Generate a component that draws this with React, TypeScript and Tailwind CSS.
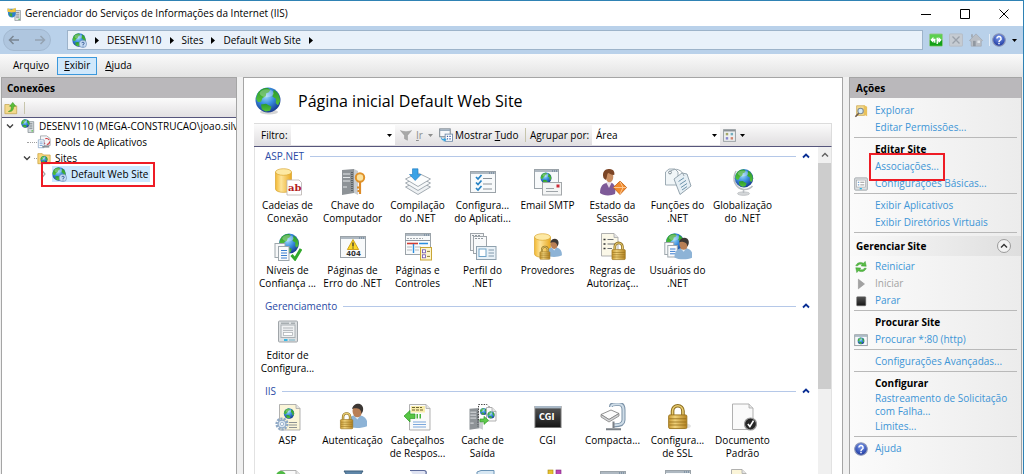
import type { ReactNode } from "react";

/* ---------- drawing parts shared by the icons ---------- */

type At = { x: number; y: number; s?: number };

function place({ x, y, s = 1 }: At) {
  return `translate(${x} ${y}) scale(${s})`;
}

// globe of radius 10 around 0,0
function Globe(p: At) {
  return (
    <g transform={place(p)}>
      <circle r="10" fill="url(#sea)" />
      <path
        d="M-8.6 -4.6 C-7 -8.4 -3 -9.9 0 -9.6 L2 -8 L0.4 -6 L-1.4 -5.4 L-1.8 -3 L-4.4 -1.6 L-5.6 1.4 L-8 1.6 L-9.6 -1 Z"
        fill="url(#land)"
      />
      <path d="M-5.6 3.6 L-1.6 3 L2.8 5.4 L1.6 8.6 L-2 9.2 L-5 7.4 Z" fill="url(#land)" />
      <path d="M4.6 -8.2 C8 -6.4 9.8 -3 9.6 1 L8 4.2 L6.2 2.4 L6.4 -1 L3.6 -2.6 L4 -5.6 Z" fill="url(#land)" />
      <ellipse cx="-1" cy="-5.4" rx="5.6" ry="3.2" fill="#fff" opacity=".28" />
    </g>
  );
}

function Padlock(p: At) {
  return (
    <g transform={place(p)}>
      <path d="M3.5 8 V5 a4 4 0 0 1 8 0 V8" fill="none" stroke="#8c6d1f" strokeWidth="2.8" />
      <path d="M3.5 8 V5 a4 4 0 0 1 8 0 V8" fill="none" stroke="#e9cd72" strokeWidth="1.2" />
      <rect x="0.5" y="8" width="14" height="10.5" rx="1" fill="url(#gold)" stroke="#9a741c" strokeWidth=".7" />
      <path d="M1 11 H14 M1 13.4 H14 M1 15.8 H14" stroke="#8f6a17" strokeWidth=".8" opacity=".75" />
    </g>
  );
}

function Person({ shirt = "#8db3d6", hair = "#3c3734", ...p }: At & { shirt?: string; hair?: string }) {
  return (
    <g transform={place(p)}>
      <path d="M0 19 C0 13 3 10.5 6 10 L12 10 C16 11 18 14 18 19 C13 21.5 4 21.5 0 19Z" fill={shirt} />
      <path d="M6 10 L9 13.5 L11.5 10Z" fill="#e9f1f8" />
      <ellipse cx="9" cy="6" rx="4.2" ry="5.6" fill="#b97f56" />
      <path d="M4.4 4.5 C5 0 10 -1.6 12.6 0.8 C15 3 14 7 12.6 8.4 C12.4 5.6 11 4 8.6 3.8 C7 3.6 5.4 3.6 4.4 4.5Z" fill={hair} />
    </g>
  );
}

function Cylinder(p: At) {
  return (
    <g transform={place(p)}>
      <path d="M0 3.5 V20.5 C0 25 16 25 16 20.5 V3.5Z" fill="url(#amber)" stroke="#d19a1f" strokeWidth=".6" />
      <ellipse cx="8" cy="3.5" rx="8" ry="3.3" fill="#fde9a4" stroke="#dba935" strokeWidth=".7" />
    </g>
  );
}

function Sheet({ w = 14, h = 18, fill = "#fafafa", ...p }: At & { w?: number; h?: number; fill?: string }) {
  return (
    <g transform={place(p)}>
      <path d={`M.5 .5 H${w - 4} L${w} 4.5 V${h} H.5Z`} fill={fill} stroke="#a8a8a8" strokeWidth=".9" />
      <path d={`M${w - 4} .5 V4.5 H${w}`} fill="#e4e4e4" stroke="#a8a8a8" strokeWidth=".8" />
    </g>
  );
}

function Frame({ w = 26, h = 20, ...p }: At & { w?: number; h?: number }) {
  return (
    <g transform={place(p)}>
      <rect x=".5" y=".5" width={w - 1} height={h - 1} fill="#f8fafb" stroke="#9ba3a9" />
      <rect x="1" y="1" width={w - 2} height="2" fill="#aeb8c1" />
      <path d={`M${w - 7} 2 H${w - 2}`} stroke="#56728c" strokeDasharray="1 1" />
    </g>
  );
}

function Tower(p: At) {
  return (
    <g transform={place(p)}>
      <path d="M0 1 L12 0 V24 L0 26Z" fill="#8e9397" />
      <path d="M12 0 L16 2 V26 L12 24Z" fill="#c9cdd0" />
      <path d="M1 5 H8 M1 8.5 H8 M1 12 H8 M1 18 H5" stroke="#e4e7e9" strokeWidth="1.1" />
      <path d="M10 3 V23" stroke="#5c6266" strokeWidth="2" strokeDasharray="1 1" />
    </g>
  );
}

function Defs() {
  return (
    <svg className="absolute size-0" aria-hidden="true">
      <defs>
        <radialGradient id="sea" cx=".42" cy=".35" r=".7">
          <stop offset="0" stopColor="#9fd8f8" />
          <stop offset=".45" stopColor="#3a8fe0" />
          <stop offset="1" stopColor="#132f86" />
        </radialGradient>
        <linearGradient id="land" x1="0" y1="0" x2="0" y2="1">
          <stop offset="0" stopColor="#2a9a2c" />
          <stop offset="1" stopColor="#55c23a" />
        </linearGradient>
        <linearGradient id="gold">
          <stop offset="0" stopColor="#c99a35" />
          <stop offset=".35" stopColor="#f0d27a" />
          <stop offset="1" stopColor="#b58322" />
        </linearGradient>
        <linearGradient id="amber">
          <stop offset="0" stopColor="#f3b933" />
          <stop offset=".35" stopColor="#fde49a" />
          <stop offset="1" stopColor="#e9a921" />
        </linearGradient>
        <linearGradient id="dark" x1="0" y1="0" x2="0" y2="1">
          <stop offset="0" stopColor="#555" />
          <stop offset="1" stopColor="#151515" />
        </linearGradient>
        <radialGradient id="help" cx=".5" cy=".3" r=".7">
          <stop offset="0" stopColor="#7c9cf0" />
          <stop offset="1" stopColor="#1a349c" />
        </radialGradient>
      </defs>
    </svg>
  );
}

/* ---------- feature icons, 28 x 28 ---------- */

const featureIcons: Record<string, ReactNode> = {
  connection: (
    <>
      <Cylinder x={1.5} y={0.5} />
      <path d="M13 12 H25 L27.5 14.5 V27 H13Z" fill="#fff" stroke="#b9b1ae" strokeWidth=".8" />
      <text x="14" y="23" fontSize="10" fontWeight="700" fill="#b3201c" className="font-['DejaVu_Serif',serif]">ab</text>
    </>
  ),
  key: (
    <>
      <Tower x={3} y={1} />
      <circle cx="21" cy="9.5" r="4.2" fill="#fbe3a0" stroke="#e0922a" strokeWidth="2" />
      <path d="M21 14 V26 M21 19.5 H18 M21 23 H18.5" stroke="#dd8b28" strokeWidth="2.2" fill="none" />
    </>
  ),
  compile: (
    <>
      <path d="M1.5 19 L14 13 L26.5 19 L14 26.5Z" fill="#eef1f3" stroke="#9aa3aa" strokeWidth=".9" />
      <path d="M1.5 15 L14 9 L26.5 15 L14 22.5Z" fill="#f6f8f9" stroke="#9aa3aa" strokeWidth=".9" />
      <path d="M1.5 11 L14 5 L26.5 11 L14 18.5Z" fill="#fcfdfd" stroke="#9aa3aa" strokeWidth=".9" />
      <path d="M8.5 .8 H14 V6.5 H17 L11.2 12.5 L5.5 6.5 H8.5Z" fill="#3aa2e6" stroke="#1d78bd" strokeWidth=".6" />
    </>
  ),
  appsettings: (
    <>
      <Frame x={1} y={3} h={22} />
      <path d="M7 9 l2 2 l3.5 -4 M7 14.5 l2 2 l3.5 -4 M7 20 l2 2 l3.5 -4" stroke="#2582c4" strokeWidth="1.7" fill="none" />
      <path d="M14 10.5 H23 M14 16 H23 M14 21 H23" stroke="#8a9299" strokeWidth="1.1" />
    </>
  ),
  smtp: (
    <>
      <Frame x={0} y={1} w={25} h={20} />
      <Globe x={12} y={10} s={0.55} />
      <rect x="8.5" y="14.5" width="19" height="12.5" fill="#f4f5f5" stroke="#a3a7aa" />
      <rect x="22.5" y="16.5" width="3" height="3" fill="#cc2a36" />
      <path d="M12 20.5 H20 M12 23.5 H24" stroke="#9ea4a8" />
    </>
  ),
  session: (
    <>
      <path d="M1 25 C1 18 4 15.5 8 15 L13 15 C16 17 17 20 16 26 C12 28 4 28 1 25Z" fill="#7e5a98" />
      <path d="M7 14 L10 20 L13 14Z" fill="#ecdfe9" />
      <ellipse cx="10.5" cy="8.8" rx="3.8" ry="5.5" fill="#c98e63" />
      <path d="M4.5 10 C2.5 3 7 .4 10.5 1 C15 1 16 5 15.2 7 C12 7 10 5 9 5 C7.6 6.6 8.4 10 6.6 12Z" fill="#7b4526" />
      <path d="M21 13 L27.6 19.5 L21 26.5 L14.4 19.5Z" fill="#f08a2c" stroke="#c25e10" strokeWidth=".8" />
      <path d="M21 13.5 L24 19.5 L21 26 M14.8 19.5 H24 L27 19.5" stroke="#ffd3a3" strokeWidth=".8" fill="none" />
    </>
  ),
  roles: (
    <>
      <path d="M1.5 4 L5 1 L11 1 L14 4 V17 H1.5Z" fill="#f1f6f8" stroke="#93a3ad" strokeWidth=".9" />
      <path d="M10 11 L18 5 L23 6 L27 18 L16 26.5Z" fill="#e6eff4" stroke="#8a9ba6" strokeWidth=".9" />
      <circle cx="6" cy="4.5" r="1.4" fill="#fff" stroke="#7c8b95" />
      <path d="M6 3.5 C12 -1 18 2 20 8" stroke="#9aa7af" fill="none" />
      <path d="M14.5 13.5 L20 9.8 M15.8 16.5 L22 12.4 M17 19.5 L23 15.5 M18 22 L23 18.6" stroke="#6e94ac" />
    </>
  ),
  globalization: (
    <>
      <ellipse cx="14.5" cy="25.6" rx="6" ry="1.8" fill="#d3d6d8" stroke="#b0b4b7" strokeWidth=".6" />
      <path d="M7 3 C2 12 7 21 15 21.4 C19 21.5 22 20 23.5 18 M14.5 21 V25" stroke="#b8bdc1" strokeWidth="1.5" fill="none" />
      <Globe x={15} y={10.3} s={0.92} />
    </>
  ),
  trust: (
    <>
      <Globe x={15} y={10.6} />
      <rect x="1" y="10.5" width="10" height="14" fill="#f7f8f9" stroke="#9ea7ad" />
      <rect x="4.5" y="13.5" width="10.5" height="14" fill="#fafbfc" stroke="#9ea7ad" />
      <path d="M7 17.5 H13 M7 20 H13 M7 22.5 H13 M7 25 H13" stroke="#3c7ed0" />
      <path d="M17.5 22 L21 26 L27 16" stroke="#32a92c" strokeWidth="3" fill="none" />
    </>
  ),
  errors: (
    <>
      <Frame x={1} y={3} h={22} />
      <path d="M14 6.5 L19.6 16.5 H8.4Z" fill="#fcd829" stroke="#c99b12" strokeWidth=".9" />
      <path d="M14 9.6 V13.4 M14 14.4 V15.5" stroke="#333" strokeWidth="1.3" />
      <text x="7.2" y="23.2" fontSize="7" fontWeight="700" fill="#333" className="font-['DejaVu_Sans',sans-serif]">404</text>
    </>
  ),
  controls: (
    <>
      <Frame x={1} y={0} h={22} />
      <path d="M3 5.5 H19" stroke="#a5abb0" strokeDasharray="2 1" />
      <path d="M1.5 7.5 H26" stroke="#8993a0" />
      <path d="M3 10.5 H14 " stroke="#cf3c35" strokeWidth="1.6" />
      <path d="M15 10.5 H24 M9.5 11 V20" stroke="#2a8ee0" strokeWidth="1.4" />
      <path d="M3 14 H8 M3 17 H8 M11 14 H17 M11 17 H15" stroke="#b4babe" />
      <rect x="16.5" y="14.5" width="11" height="12.5" fill="#fdf5cc" stroke="#c9a636" />
      <rect x="18.5" y="16.8" width="3" height="3" fill="#fff" stroke="#6b4fb0" strokeWidth=".8" />
      <rect x="18.5" y="21.8" width="3" height="3" fill="#fff" stroke="#6b4fb0" strokeWidth=".8" />
      <path d="M23 18.4 H26 M23 23.4 H26" stroke="#8d7a3a" />
    </>
  ),
  profile: (
    <>
      <rect x="1.5" y=".5" width="13" height="17" fill="#f4f5f6" stroke="#9fa5aa" />
      <rect x="4.5" y="3.5" width="13" height="17" fill="#f8f9fa" stroke="#9fa5aa" />
      <path d="M3 2.5 H12 M6 5.5 H15" stroke="#8f979d" strokeDasharray="2 1" />
      <rect x="7.5" y="13.5" width="19.5" height="13" fill="#e9f1f7" stroke="#8fa1ae" />
      <rect x="10" y="16" width="7" height="7.5" fill="#fff" stroke="#6fa3c8" />
      <path d="M19.5 17 H25 M19.5 20 H25 M19.5 23 H25" stroke="#8098aa" />
    </>
  ),
  providers: (
    <>
      <Cylinder x={0.5} y={0.5} />
      <Person x={12.5} y={6} s={0.86} />
      <Padlock x={5.5} y={13} s={0.72} />
    </>
  ),
  rules: (
    <>
      <Sheet x={2} y={0} w={17} h={23} fill="#fbf8e8" />
      <path d="M4.5 6.5 H6.5 M4.5 11 H6.5 M4.5 15.5 H6.5" stroke="#333" strokeWidth="1.6" />
      <path d="M8.5 6.5 H14.5 M8.5 11 H16 M8.5 15.5 H13" stroke="#6f7377" />
      <Padlock x={12.5} y={9} s={0.95} />
    </>
  ),
  users: (
    <>
      <Globe x={11} y={9.5} s={0.92} />
      <rect x=".8" y="9.5" width="9" height="12" fill="#f8f9fa" stroke="#9ea7ad" />
      <rect x="3.8" y="12.5" width="9.5" height="11.5" fill="#fbfcfd" stroke="#9ea7ad" />
      <path d="M6 16 H11.5 M6 18.4 H11.5 M6 20.8 H11.5" stroke="#3c7ed0" />
      <Person x={10.5} y={5} s={1.02} />
    </>
  ),
  editor: (
    <>
      <rect x="4.5" y="3" width="19" height="21" rx="1" fill="#dde0e2" stroke="#a0a5a9" />
      <rect x="7" y="7" width="14" height="12.5" fill="#eff1f2" stroke="#aab0b4" />
      <path d="M7 5.2 H15 M17 5.2 H21" stroke="#8f979c" />
      <path d="M9 10 H19 M9 12.4 H19" stroke="#b0b5b9" />
      <rect x="9.5" y="14.5" width="9" height="3" fill="#fff" stroke="#b0b5b9" strokeWidth=".8" />
      <path d="M10 22 H13.5" stroke="#25b4e6" strokeWidth="1.8" />
      <path d="M15 22 H21" stroke="#a3c8d4" strokeWidth="1.8" />
    </>
  ),
  asp: (
    <>
      <Sheet x={5} y={1} w={21} h={26} fill="#fbf5d8" />
      <Globe x={15} y={10.5} s={0.52} />
      <path d="M15 19.5 H23 M15 22 H23 M15 24.5 H23" stroke="#8d9193" />
      <circle cx="8" cy="21" r="5.4" fill="none" stroke="#8fa9c6" strokeWidth="2.4" strokeDasharray="2.2 1.1" />
      <circle cx="8" cy="21" r="3.9" fill="#dbe6f1" stroke="#8fa9c6" strokeWidth="1.2" />
      <circle cx="8" cy="21" r="1.6" fill="#fff" stroke="#8fa9c6" strokeWidth=".8" />
    </>
  ),
  auth: (
    <>
      <Person x={8} y={1} s={1.15} />
      <Padlock x={1} y={9.5} s={0.88} />
    </>
  ),
  headers: (
    <>
      <Sheet x={5} y={1} w={21} h={26} />
      <rect x="7" y="3" width="14" height="6.5" fill="#f9edab" />
      <path d="M8 4.5 H18 M8 7 H20" stroke="#6d6430" strokeDasharray="3 1" />
      <path d="M0 13 L6 7.5 V11 H11 V15.5 H6 V19Z" fill="#57c544" stroke="#2f9a26" strokeWidth=".7" />
      <path d="M12.5 13.2 H14 M15.5 13.2 H17" stroke="#47b53b" strokeWidth="4.4" />
      <path d="M9 19 H22 M9 21.5 H22 M9 24 H22" stroke="#7ba7dc" />
    </>
  ),
  cache: (
    <>
      <Tower x={0.5} y={5} s={0.84} />
      <path d="M9.5 1.5 H18 L21 4.5 V17 H9.5Z" fill="#fff" stroke="#444" strokeDasharray="1.4 1.2" />
      <Globe x={14.5} y={8.5} s={0.35} />
      <Sheet x={17} y={4} w={10} h={14} />
      <Globe x={22} y={12} s={0.36} />
      <path d="M11 16 H15 V13.4 L19.5 17.4 L15 21.4 V18.8 H11Z" fill="#5fc94b" stroke="#2f9a26" strokeWidth=".7" />
    </>
  ),
  cgi: (
    <>
      <rect x="1" y="3.5" width="26" height="21" fill="url(#dark)" stroke="#777" />
      <rect x="1" y="3" width="26" height="2.4" fill="#a9b8c6" />
      <text x="5" y="17" fontSize="8" fontWeight="700" fill="#fff" className="font-['DejaVu_Sans',sans-serif]">
        CGI
      </text>
    </>
  ),
  compression: (
    <>
      <path d="M12 4 C12 1 14 1 17 1 H20 C24 1 24.5 4 24.5 7 V17 C24.5 21 21 22.5 15 22.5" fill="none" stroke="#7d93a8" strokeWidth="4" />
      <path d="M12 4 C12 1.5 14 1.2 17 1.2 H20 C24 1.2 24.5 4 24.5 7 V17 C24.5 21 21 22.2 15 22.2" fill="none" stroke="#cfdde8" strokeWidth="2" />
      <path d="M2 11.5 L12 7 L20 10.5 L10 16.5Z" fill="#fcfcfc" stroke="#777" strokeWidth=".8" />
      <path d="M2 11.5 V14 L10 19 L20 13 V10.5 L10 16.5Z" fill="#d4d6d8" stroke="#777" strokeWidth=".7" />
      <path d="M14.5 18.5 V25 M7 26.3 H22" stroke="#7a8087" strokeWidth="2" />
    </>
  ),
  ssl: (
    <>
      <ellipse cx="19" cy="23" rx="8" ry="3" fill="#e3e3e3" />
      <Padlock x={4} y={1.5} s={1.3} />
    </>
  ),
  document: (
    <>
      <Sheet x={3} y={0.5} w={21} h={26} />
      <circle cx="21.5" cy="21" r="6" fill="#262626" stroke="#9a9a9a" strokeWidth="1.2" />
      <path d="M18.9 21 L20.9 23.6 L24.5 17.6" stroke="#fff" strokeWidth="1.7" fill="none" />
    </>
  ),
  pageGreen: (
    <>
      <Sheet x={6} y={2} w={20} h={26} />
      <circle cx="7" cy="8" r="5" fill="#4fb944" />
    </>
  ),
  funnel: <path d="M5 3 H24 L17 13 V26 H12 V13Z" fill="#5f86a8" stroke="#3d5f7c" />,
  scroll: (
    <path d="M6 2.5 H20 C23 2.5 23 7 20 7 H10 V26 H24" fill="#dfe3f2" stroke="#5c6a9a" strokeWidth="1.2" />
  ),
  module: <path d="M8 4 L12 2.5 H25 V20 L20 24 H8Z" fill="#d7e7f3" stroke="#6a93b6" />,
  books: (
    <>
      <rect x="14" y="2" width="5" height="22" fill="#e6c12f" stroke="#a88710" strokeWidth=".6" />
      <rect x="22" y="2" width="5" height="22" fill="#bb45b8" stroke="#7d2a7a" strokeWidth=".6" />
    </>
  ),
  darkWindow: (
    <>
      <Frame x={1} y={3} h={22} />
      <rect x="2" y="6" width="24" height="18" fill="#4c6378" />
    </>
  ),
  window: <Frame x={1} y={2} h={22} />,
  pageCream: <Sheet x={2} y={1} w={15} h={24} fill="#fbf5d8" />,
};

/* ---------- small icons, 16 x 16 ---------- */

const smallIcons: Record<string, ReactNode> = {
  site: (
    <>
      <Globe x={7.5} y={7.5} s={0.72} />
      <circle cx="11.6" cy="11.6" r="4" fill="#c6dcf3" stroke="#6d90bb" strokeWidth=".7" />
      <path d="M10.4 10.8 a1.3 1.2 0 1 1 1.3 1.4 V13 M11.7 13.6 V14.4" stroke="#2a4f90" strokeWidth=".9" fill="none" />
    </>
  ),
  server: (
    <>
      <path d="M8 3 H14.5 V15.5 H8Z" fill="#d5dadd" stroke="#80888e" strokeWidth=".8" />
      <path d="M9.5 5.5 H13 M9.5 8 H13 M9.5 10.5 H13" stroke="#6f777d" />
      <path d="M12 13.5 H13.6" stroke="#48c23a" strokeWidth="1.4" />
      <Globe x={5} y={5.2} s={0.48} />
    </>
  ),
  app: (
    <>
      <path d="M9 4 H15.4 V15.5 H9Z" fill="#dde1e3" stroke="#8b9297" strokeWidth=".8" />
      <path d="M10.4 6.5 H14 M10.4 9 H14 M10.4 11.5 H14" stroke="#727a80" />
      <path d="M13 14 H14.8" stroke="#48c23a" strokeWidth="1.4" />
      <path d="M.6 2 H10 V8 C9.5 13 3 13 1.4 9Z" fill="#2f7fd0" />
      <path d="M.6 1.4 L5 3.2 L10 .8 V5.8 L5 6.4 L.6 5.4Z" fill="#f2c53b" />
      <path d="M2.5 7 H6 V11.4 L3 10Z" fill="#3faa3a" />
    </>
  ),
  pools: (
    <>
      <path d="M4 1 H11 L15 4 V12 H4Z" fill="#f5f6f8" stroke="#8d949a" strokeWidth=".8" />
      <circle cx="11" cy="7.4" r="3.4" fill="none" stroke="#cf3a3f" strokeWidth="1.2" strokeDasharray="5 2" />
      <path d="M1.5 5.5 H8 V14.5 H1.5Z" fill="#fff" stroke="#7b9cc0" strokeWidth=".8" />
      <path d="M3 8 H6.5 M3 10 H6.5 M3 12 H6.5" stroke="#4d86c6" strokeWidth=".8" />
      <path d="M6 13.5 H14" stroke="#7c858c" strokeWidth="1.6" />
    </>
  ),
  sites: (
    <>
      <path d="M1 3 H6 L7.5 4.6 H15 V14.5 H1Z" fill="#f6d67c" stroke="#c99c33" strokeWidth=".8" />
      <Globe x={8} y={9.6} s={0.4} />
    </>
  ),
  folderUp: (
    <>
      <path d="M1 4 H6 L7.5 5.6 H14.5 V14.5 H1Z" fill="#f3d98b" stroke="#c2a04a" strokeWidth=".8" />
      <path d="M5 12 C8 11.5 8.4 9 8.4 6 H6.4 L10 1.6 L13.4 6 H11 C11 10.4 9 12.6 5 12Z" fill="#5bbf3a" stroke="#2f8f1c" strokeWidth=".6" />
    </>
  ),
  explore: (
    <>
      <path d="M3 2 H12 V13 H3Z" fill="#f5dc92" stroke="#c9a145" strokeWidth=".8" />
      <path d="M11 1 L15 3 V14 L11 12Z" fill="#e9c15c" />
      <circle cx="7.5" cy="8" r="3.1" fill="#d5ecfa" stroke="#7d8a94" strokeWidth="1.2" />
      <path d="M5.4 10.6 L1.6 14.6" stroke="#6c5a4a" strokeWidth="1.8" />
    </>
  ),
  settings: (
    <>
      <rect x=".8" y="1" width="14.4" height="14" rx="1" fill="#dfe2e4" stroke="#9aa0a5" />
      <rect x="2.8" y="3.5" width="10.4" height="8" fill="#fff" stroke="#9aa0a5" strokeWidth=".7" />
      <path d="M4.4 6 H6 M4.4 9 H6" stroke="#3377bb" />
      <path d="M7.2 6 H11.8 M7.2 9 H11.8" stroke="#888" />
      <path d="M6.5 13.3 H9" stroke="#25b4e6" strokeWidth="1.4" />
    </>
  ),
  restart: (
    <>
      <path d="M2 6.6 C3.4 2.6 8 1.8 10.8 3.8 L12.8 1.6 L14 7.2 L8.2 6.8 L9.6 5.2 C7.4 4.2 5 4.8 4.2 6.6Z" fill="#58be45" stroke="#2f8f26" strokeWidth=".5" />
      <path d="M14 9.4 C12.6 13.4 8 14.2 5.2 12.2 L3.2 14.4 L2 8.8 L7.8 9.2 L6.4 10.8 C8.6 11.8 11 11.2 11.8 9.4Z" fill="#58be45" stroke="#2f8f26" strokeWidth=".5" />
    </>
  ),
  play: <path d="M5 2.5 L12 8 L5 13.5Z" fill="#a2a2a2" stroke="#8a8a8a" strokeWidth=".6" />,
  stop: <rect x="3" y="3" width="10.5" height="10.5" rx="1" fill="url(#dark)" stroke="#777" strokeWidth=".6" />,
  browse: (
    <>
      <rect x=".8" y="2" width="14.4" height="12.4" fill="#f7f8f9" stroke="#8f979d" />
      <path d="M1 3.4 H15" stroke="#9fb0bd" strokeWidth="1.8" />
      <Globe x={8} y={9} s={0.38} />
    </>
  ),
  help: (
    <>
      <circle cx="8" cy="8" r="7.2" fill="url(#help)" stroke="#8e98b8" strokeWidth="1.3" />
      <path d="M5.6 6.4 a2.4 2.3 0 1 1 3.5 2 C8.2 8.9 8 9.2 8 10.2 M8 11.2 V12.9" stroke="#fff" strokeWidth="1.7" fill="none" />
    </>
  ),
  refresh: (
    <>
      <rect x=".5" y="1" width="15" height="14" rx="1" fill="#5cd04e" stroke="#9bc79a" />
      <path d="M1 8 H15 V14.5 H1Z" fill="#12a017" />
      <path d="M1.6 8 L5 4.4 V6.6 H7.4 V11 H5.8 V9.4 H5 V11.4Z" fill="#fff" />
      <path d="M14.4 8 L11 11.6 V9.8 H10.2 V12.6 H8.6 V5.4 H10.4 V6.6 H11 V4.6Z" fill="#fff" />
    </>
  ),
  cancel: (
    <>
      <rect x=".5" y="1" width="15" height="14" rx="1" fill="#c5cbd2" stroke="#b5bcc5" />
      <path d="M4 4 L12 12 M12 4 L4 12" stroke="#9aa1aa" strokeWidth="1.5" />
    </>
  ),
  home: (
    <>
      <path d="M.5 8.6 L8 1 L15.5 8.6 L14 9.6 V15 H2.5 V9.6Z" fill="#b9bec5" stroke="#a1a8b1" strokeWidth=".8" />
      <path d="M3.4 1.4 V5" stroke="#a1a8b1" strokeWidth="2" />
      <rect x="4.6" y="9" width="3" height="6" fill="#9097a0" />
      <rect x="9.6" y="8.6" width="3" height="2.8" fill="#e2e6ea" />
    </>
  ),
  filter: <path d="M.5 2 C4 4 12 4 15.5 2 L10 8.5 V15 L6 13 V8.5Z" fill="#a8a8a8" stroke="#8f8f8f" strokeWidth=".6" />,
  showAll: (
    <>
      <rect x=".8" y="1" width="12" height="9" fill="#f6f8fa" stroke="#77818a" strokeWidth="1.1" />
      <path d="M1 2.5 H12.6" stroke="#8da2b5" strokeWidth="1.6" />
      <rect x="7" y="7" width="8.4" height="8.2" fill="#fff" stroke="#6d88a8" />
      <path d="M9 9.6 H10.4 M11.8 9.6 H13.4 M9 12.4 H10.4 M11.8 12.4 H13.4" stroke="#3a5fa8" strokeWidth="1.4" />
      <path d="M2 9 C3 12 4 12.6 5.4 12.6 V11 L8.8 13.4 L5.4 15.8 V14.4 C3 14.4 2 12 2 9Z" fill="#38a4e0" />
    </>
  ),
  tiles: (
    <>
      <rect x=".7" y=".8" width="14.6" height="14.4" fill="#eef0f1" stroke="#9aa0a4" strokeWidth="1.2" />
      <path d="M1 2 H15" stroke="#8b9196" strokeWidth="2" />
      <rect x="3.4" y="4.8" width="3" height="3" fill="#a5a76a" />
      <rect x="9.4" y="4.8" width="3" height="3" fill="#76aebf" />
      <rect x="3.4" y="10" width="3" height="3" fill="#8886cf" />
      <rect x="9.4" y="10" width="3" height="3" fill="#cf8470" />
    </>
  ),
};

function Small({ name, className = "size-3.5" }: { name: string; className?: string }) {
  return (
    <svg viewBox="0 0 16 16" className={`shrink-0 ${className}`} aria-hidden="true">
      {smallIcons[name]}
    </svg>
  );
}

function Down({ className = "text-black" }: { className?: string }) {
  return (
    <svg viewBox="0 0 5 3" className={`h-[3px] w-[5px] shrink-0 ${className}`} aria-hidden="true">
      <path d="M0 0 H5 L2.5 3Z" fill="currentColor" />
    </svg>
  );
}

function Crumb() {
  return (
    <svg viewBox="0 0 4 7" className="mx-2 h-[7px] w-1 shrink-0" aria-hidden="true">
      <path d="M0 0 L4 3.5 L0 7Z" />
    </svg>
  );
}

function Twisty({ open, className = "" }: { open: boolean; className?: string }) {
  return (
    <svg viewBox="0 0 8 8" className={`size-2 shrink-0 fill-none ${className}`} aria-hidden="true">
      {open ? (
        <path d="M1 2.5 L4 5.5 L7 2.5" stroke="#404040" strokeWidth="1.4" />
      ) : (
        <path d="M2.5 1 L5 4 L2.5 7" stroke="#a6a6a6" strokeWidth="1.2" />
      )}
    </svg>
  );
}

/* ---------- window bars ---------- */

function TitleBar() {
  return (
    <header className="flex h-[25px] shrink-0 items-center bg-white pl-[7px]">
      <Small name="app" />
      <h1 className="ml-1 flex-1">Gerenciador do Serviços de Informações da Internet (IIS)</h1>
      <button aria-label="Minimizar" className="flex h-6 w-[39px] items-center justify-center">
        <svg viewBox="0 0 10 10" className="size-2.5"><path d="M0 5.5 H10" stroke="#000" /></svg>
      </button>
      <button aria-label="Maximizar" className="flex h-6 w-[39px] items-center justify-center">
        <svg viewBox="0 0 10 10" className="size-2.5 fill-none"><path d="M.5 .5 H9.5 V9.5 H.5Z" stroke="#000" /></svg>
      </button>
      <button aria-label="Fechar" className="flex h-6 w-[39px] items-center justify-center">
        <svg viewBox="0 0 10 10" className="size-2.5"><path d="M.5 .5 L9.5 9.5 M9.5 .5 L.5 9.5" stroke="#000" /></svg>
      </button>
    </header>
  );
}

function AddressBar() {
  return (
    <div className="flex h-7 shrink-0 items-center bg-[#b9d1ea] pr-1.5">
      <div className="ml-[3px] flex h-[22px] w-12 items-center justify-between rounded-xl border border-[#a3b9d1] bg-[#afc6df] px-1">
        <button aria-label="Voltar">
          <svg viewBox="0 0 12 10" className="h-2.5 w-3 fill-none"><path d="M11 5 H1.5 M5.5 1 L1.5 5 L5.5 9" stroke="#7b8794" strokeWidth="1.5" /></svg>
        </button>
        <button aria-label="Avançar">
          <svg viewBox="0 0 12 10" className="h-2.5 w-3 fill-none"><path d="M1 5 H10.5 M6.5 1 L10.5 5 L6.5 9" stroke="#95a3b2" strokeWidth="1.5" /></svg>
        </button>
      </div>
      <nav aria-label="Caminho" className="ml-4 flex h-5 flex-1 items-center border border-[#9db3ca] bg-[#e9f1fa] pl-1">
        <Small name="site" className="size-[15px]" />
        <Crumb />
        <a href="#">DESENV110</a>
        <Crumb />
        <a href="#">Sites</a>
        <Crumb />
        <a href="#">Default Web Site</a>
        <Crumb />
      </nav>
      <div className="ml-1.5 flex items-center gap-1.5">
        <button aria-label="Atualizar"><Small name="refresh" /></button>
        <button aria-label="Interromper"><Small name="cancel" /></button>
        <button aria-label="Início"><Small name="home" /></button>
        <span className="h-3 w-px bg-[#e6eef7]" />
        <button aria-label="Ajuda" className="-ml-1 flex items-center gap-1.5">
          <Small name="help" />
          <Down />
        </button>
      </div>
    </div>
  );
}

function MenuBar() {
  return (
    <nav aria-label="Menu" className="flex h-[23px] shrink-0 items-center bg-linear-to-b from-[#fafafa] to-[#e3e3e3] pl-[5px]">
      <button className="h-[18px] px-2">Arqui<u>v</u>o</button>
      <button className="h-[18px] w-10 border border-[#3b98dc] bg-[#d0e8fb]"><u>E</u>xibir</button>
      <button className="h-[18px] px-2"><u>A</u>juda</button>
    </nav>
  );
}

/* ---------- left panel ---------- */

function Connections() {
  return (
    <aside className="flex w-[236px] shrink-0 flex-col overflow-hidden border border-[#a5a5a5] bg-white">
      <h2 className="h-5 shrink-0 bg-[#bab8bb] px-[5px] leading-5 font-bold">Conexões</h2>
      <div className="flex h-5 shrink-0 items-center border-b border-[#56567c] bg-linear-to-b from-[#fbfbfb] to-[#e2e0e2] pl-[2px]">
        <button aria-label="Criar nova conexão"><Small name="folderUp" /></button>
        <span className="ml-1.5 h-3 w-px bg-[#c7c5ac]" />
      </div>
      <ul className="whitespace-nowrap">
        <li className="flex h-4 items-center pl-1">
          <Twisty open />
          <Small name="server" className="ml-[7px] size-3.5" />
          <span className="ml-1">DESENV110 (MEGA-CONSTRUCAO\joao.silv</span>
        </li>
        <li className="flex h-4 items-center pl-[25px]">
          <span className="w-2.5 border-t border-dotted border-[#a0a0a0]" />
          <Small name="pools" />
          <span className="ml-1">Pools de Aplicativos</span>
        </li>
        <li className="flex h-4 items-center pl-[21px]">
          <Twisty open />
          <span className="ml-[3px] w-[3px] border-t border-dotted border-[#a0a0a0]" />
          <Small name="sites" />
          <span className="ml-1">Sites</span>
        </li>
        <li className="relative flex h-4 items-center pl-[38px]">
          <Twisty open={false} />
          <span className="ml-1 flex items-center bg-[#cce8ff] pr-0.5">
            <Small name="site" className="size-[15px]" />
            <span className="ml-1 leading-4">Default Web Site</span>
          </span>
          <span className="absolute -top-1 left-[39px] h-[25px] w-[114px] border-2 border-[#ee1c25]" />
        </li>
      </ul>
    </aside>
  );
}

/* ---------- centre panel ---------- */

type Feature = { icon: string; label?: string };

const groups: { title: string; items: Feature[] }[] = [
  {
    title: "ASP.NET",
    items: [
      { icon: "connection", label: "Cadeias de\nConexão" },
      { icon: "key", label: "Chave do\nComputador" },
      { icon: "compile", label: "Compilação\ndo .NET" },
      { icon: "appsettings", label: "Configura...\ndo Aplicati..." },
      { icon: "smtp", label: "Email SMTP" },
      { icon: "session", label: "Estado da\nSessão" },
      { icon: "roles", label: "Funções do\n.NET" },
      { icon: "globalization", label: "Globalização\ndo .NET" },
      { icon: "trust", label: "Níveis de\nConfiança ..." },
      { icon: "errors", label: "Páginas de\nErro do .NET" },
      { icon: "controls", label: "Páginas e\nControles" },
      { icon: "profile", label: "Perfil do\n.NET" },
      { icon: "providers", label: "Provedores" },
      { icon: "rules", label: "Regras de\nAutorizaç..." },
      { icon: "users", label: "Usuários do\n.NET" },
    ],
  },
  { title: "Gerenciamento", items: [{ icon: "editor", label: "Editor de\nConfigura..." }] },
  {
    title: "IIS",
    items: [
      { icon: "asp", label: "ASP" },
      { icon: "auth", label: "Autenticação" },
      { icon: "headers", label: "Cabeçalhos\nde Respos..." },
      { icon: "cache", label: "Cache de\nSaída" },
      { icon: "cgi", label: "CGI" },
      { icon: "compression", label: "Compacta..." },
      { icon: "ssl", label: "Configura...\nde SSL" },
      { icon: "document", label: "Documento\nPadrão" },
      { icon: "pageGreen" },
      { icon: "funnel" },
      { icon: "scroll" },
      { icon: "module" },
      { icon: "books" },
      { icon: "darkWindow" },
      { icon: "window" },
      { icon: "pageCream" },
    ],
  },
];

function FilterBar() {
  return (
    <div className="flex h-6 shrink-0 items-center border-t border-r border-b border-t-[#dcdcdc] border-r-[#dcdcdc] border-b-[#56567c] bg-linear-to-b from-[#fbfbfb] to-[#e0dee0] pl-[7px] whitespace-nowrap">
      <label htmlFor="filtro" className="w-[30px]">Filtro:</label>
      <div className="flex h-5 w-[104px] items-center bg-white pr-[3px]">
        <input id="filtro" className="min-w-0 flex-1 px-1 outline-none" />
        <Down />
      </div>
      <button className="ml-[5px] flex w-7 items-center gap-1 text-[#8d8d8d]">
        <Small name="filter" className="size-3" />
        <span><u>I</u>r</span>
      </button>
      <Down className="mr-1.5 text-[#8d8d8d]" />
      <button className="flex w-[82px] items-center gap-0.5">
        <Small name="showAll" />
        <span>Mostrar <u>T</u>udo</span>
      </button>
      <span className="mx-1 h-3.5 w-px bg-[#c7c5ac]" />
      <label htmlFor="area" className="w-[62px]">Agrupar por:</label>
      <div className="flex h-5 w-32 items-center bg-white pr-[3px]">
        <select id="area" className="min-w-0 flex-1 appearance-none px-1 outline-none">
          <option>Área</option>
        </select>
        <Down />
      </div>
      <button aria-label="Exibição" className="ml-[3px] flex items-center gap-1">
        <Small name="tiles" className="size-[13px]" />
        <Down />
      </button>
    </div>
  );
}

function FeatureGroup({ title, items }: { title: string; items: Feature[] }) {
  return (
    <section className="mb-1">
      <h3 className="flex h-4 items-center pl-2.5 text-[#2a4aa5]">
        {title}
        <span className="ml-1.5 h-px flex-1 bg-[#b5c8e8]" />
        <svg viewBox="0 0 8 6" className="mr-2 ml-1.5 h-1.5 w-2 fill-none" aria-hidden="true">
          <path d="M1 4.5 L4 1.5 L7 4.5" stroke="#0a2f94" strokeWidth="1.8" />
        </svg>
      </h3>
      <ul className="flex flex-wrap">
        {items.map(({ icon, label }) => (
          <li key={icon} className="h-[65px] w-[65px]">
            <button aria-label={icon} className="flex w-full flex-col items-center pt-1">
              <svg viewBox="0 0 28 28" className="size-7" aria-hidden="true">{featureIcons[icon]}</svg>
              <span className="mt-[3px] leading-[13px] whitespace-pre">{label}</span>
            </button>
          </li>
        ))}
      </ul>
    </section>
  );
}

function Home() {
  return (
    <main className="flex min-w-0 flex-1 flex-col border border-[#a5a5a5] bg-white pr-2.5 pl-2.5">
      <div className="flex h-[45px] shrink-0 items-center">
        <svg viewBox="0 0 28 28" className="size-7" aria-hidden="true">
          <ellipse cx="15" cy="25" rx="9" ry="2.4" fill="#d5d5d5" />
          <Globe x={14} y={13} s={1.25} />
        </svg>
        <h2 className="ml-4 text-base">Página inicial Default Web Site</h2>
      </div>
      <FilterBar />
      <div className="flex min-h-0 flex-1 border-r border-[#e2e2e2]">
        <div className="min-w-0 flex-1 overflow-hidden border-l border-[#e2e2e2] pt-px">
          {groups.map((g) => (
            <FeatureGroup key={g.title} {...g} />
          ))}
        </div>
        <div className="flex w-[13px] shrink-0 flex-col bg-[#f0f0f0]">
          <button aria-label="Rolar para cima" className="flex h-4 items-center justify-center">
            <svg viewBox="0 0 8 6" className="h-1.5 w-2 fill-none"><path d="M1 4.5 L4 1.5 L7 4.5" stroke="#606060" strokeWidth="1.4" /></svg>
          </button>
          <span className="h-[69%] bg-[#cdcdcd]" />
        </div>
      </div>
    </main>
  );
}

/* ---------- right panel ---------- */

function Rule() {
  return <hr className="mx-1 mt-px mb-[3px] border-[#b9b9b9]" />;
}

type ActionProps = { icon?: string; children: ReactNode; disabled?: boolean; tall?: boolean };

function Action({ icon, children, disabled, tall }: ActionProps) {
  return (
    <div className={`flex items-center pl-1 ${tall ? "leading-[13px]" : "h-[17px]"}`}>
      <span className="w-[21px] shrink-0">{icon && <Small name={icon} />}</span>
      {disabled ? (
        <span className="text-[#a3a3a3]">{children}</span>
      ) : (
        <a href="#" className="text-[#3d95d6]">{children}</a>
      )}
    </div>
  );
}

function Heading({ children }: { children: ReactNode }) {
  return <h3 className="h-[17px] pl-[25px] leading-[17px] font-bold">{children}</h3>;
}

function Actions() {
  return (
    <aside className="flex w-[173px] shrink-0 flex-col overflow-hidden border border-[#a5a5a5] bg-linear-to-r from-[#fbfbfb] to-[#ececec] whitespace-nowrap">
      <h2 className="h-5 shrink-0 bg-[#bab8bb] px-1.5 leading-5 font-bold">Ações</h2>
      <div className="pt-1">
        <Action icon="explore">Explorar</Action>
        <Action>Editar Permissões...</Action>
        <Rule />
        <Heading>Editar Site</Heading>
        <div className="relative">
          <Action>Associações...</Action>
          <span className="absolute -top-[5px] left-[19px] h-7 w-[76px] border-2 border-[#ee1c25]" />
        </div>
        <Action icon="settings">Configurações Básicas...</Action>
        <Rule />
        <Action>Exibir Aplicativos</Action>
        <Action>Exibir Diretórios Virtuais</Action>
        <Rule />
        <div className="mb-0.5 flex h-5 items-center justify-between bg-linear-to-r from-[#fafafa] to-[#dedede] pr-2.5 pl-1.5">
          <h3 className="font-bold">Gerenciar Site</h3>
          <button aria-label="Recolher" className="flex size-3.5 items-center justify-center rounded-full border border-[#9b9b9b] bg-[#f2f2f2]">
            <svg viewBox="0 0 8 6" className="h-1.5 w-2 fill-none"><path d="M1 4.5 L4 1.5 L7 4.5" stroke="#333" strokeWidth="1.4" /></svg>
          </button>
        </div>
        <Action icon="restart">Reiniciar</Action>
        <Action icon="play" disabled>Iniciar</Action>
        <Action icon="stop">Parar</Action>
        <Rule />
        <Heading>Procurar Site</Heading>
        <Action icon="browse">Procurar *:80 (http)</Action>
        <Rule />
        <Action>Configurações Avançadas...</Action>
        <Rule />
        <Heading>Configurar</Heading>
        <Action tall>
          Rastreamento de Solicitação
          <br />
          com Falha...
        </Action>
        <Action>Limites...</Action>
        <Rule />
        <Action icon="help">Ajuda</Action>
      </div>
    </aside>
  );
}

export default function App() {
  return (
    <div className="flex h-screen flex-col overflow-hidden border-t border-r border-[#2f82b4] bg-[#f0f0f0] font-['Open_Sans',sans-serif] text-[10px] text-black">
      <Defs />
      <TitleBar />
      <AddressBar />
      <MenuBar />
      <div className="-mb-px flex min-h-0 flex-1 gap-1.5 pr-px pl-px">
        <Connections />
        <Home />
        <Actions />
      </div>
    </div>
  );
}
